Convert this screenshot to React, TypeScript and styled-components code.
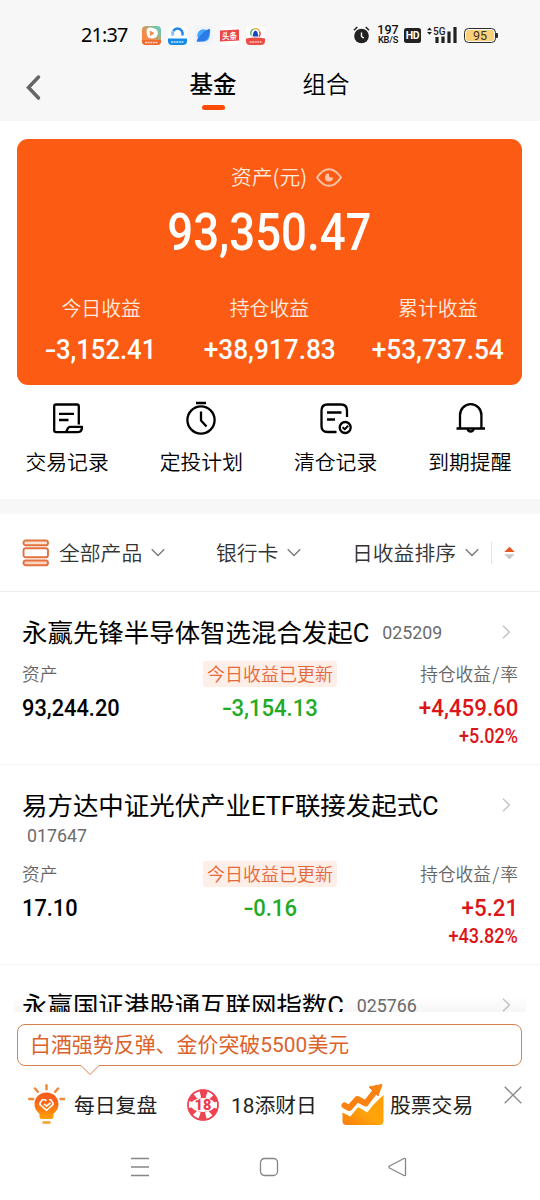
import React from "react";
import styled, { createGlobalStyle } from "styled-components";

const GlobalStyle = createGlobalStyle`
  * { box-sizing: border-box; }
  body {
    margin: 0;
    background: #fff;
    font-family: "Noto Sans CJK SC", sans-serif;
    font-weight: 350;
    color: #000;
  }
  svg { display: block; flex: none; }
`;

const mixedFont = `Roboto, "Noto Sans CJK SC", sans-serif`;

const Screen = styled.div`
  width: 540px;
  height: 1200px;
  overflow: hidden;
  display: flex;
  flex-direction: column;
  background: #fff;
`;

/* ---------- header ---------- */
const Header = styled.header`
  height: 121px;
  flex: none;
  background: #f7f7f7;
`;

const StatusBar = styled.div`
  height: 61px;
  padding: 9px 42px 0 81px;
  display: flex;
  align-items: center;
`;

const Clock = styled.span`
  width: 61px;
  font: 400 19.8px/24px "Noto Sans", sans-serif;
  letter-spacing: -0.8px;
  white-space: nowrap;
`;

const AppIcons = styled.div`
  display: flex;
  gap: 7px;
`;

const StatusRight = styled.div`
  margin-left: auto;
  display: flex;
  align-items: center;
`;

const Speed = styled.div`
  width: 22px;
  margin: 0 5px 0 7px;
  text-align: center;
  font: 500 12.5px/10px Roboto, sans-serif;
  color: #111;
  white-space: nowrap;
  small { display: block; font-size: 9.3px; line-height: 10px; letter-spacing: -0.2px; }
`;

const HdBadge = styled.span`
  width: 17px;
  height: 15px;
  margin-right: 5px;
  border-radius: 2.5px;
  background: #222;
  color: #fff;
  text-align: center;
  font: 700 10.5px/15px Roboto, sans-serif;
  letter-spacing: -0.4px;
`;

const Battery = styled.div`
  width: 32px;
  height: 15px;
  margin-left: 7px;
  border: 1.3px solid #2b2b2b;
  border-radius: 4.5px;
  padding: 1px;
  span {
    display: block;
    height: 11px;
    border-radius: 2px;
    background: #fad07a;
    text-align: center;
    font: 400 12.5px/11.5px Roboto, sans-serif;
    color: #3d3420;
  }
`;

const BatteryCap = styled.i`
  width: 2px;
  height: 5px;
  background: #2b2b2b;
  border-radius: 0 1px 1px 0;
`;

const TabBar = styled.nav`
  height: 60px;
  padding-left: 26px;
  display: flex;
`;

const BackIcon = styled.svg`
  margin-top: 13px;
`;

const Tab = styled.div<{ $active?: boolean; $gap: number }>`
  width: 48px;
  margin-left: ${(p) => p.$gap}px;
  font-size: 23.5px;
  line-height: 44px;
  font-weight: ${(p) => (p.$active ? 500 : 350)};
  display: flex;
  flex-direction: column;
  align-items: center;
  white-space: nowrap;
  &::after {
    content: "";
    display: ${(p) => (p.$active ? "block" : "none")};
    width: 23px;
    height: 5px;
    border-radius: 3px;
    background: #fc4c05;
  }
`;

/* ---------- numbers ---------- */
const Figure = styled.span<{ $size: number; $color?: string; $origin?: string; $scale?: number }>`
  display: inline-block;
  font-family: Roboto, sans-serif;
  font-weight: 500;
  font-size: ${(p) => p.$size}px;
  color: ${(p) => p.$color ?? "inherit"};
  transform: scaleX(${(p) => p.$scale ?? 0.92});
  transform-origin: ${(p) => p.$origin ?? "center"};
  white-space: nowrap;
`;

const Minus = styled.span`
  display: inline-block;
  width: 0.42em;
  transform: scaleX(1.35);
  transform-origin: 10% 50%;
`;

function Amount({ value, ...rest }: { value: string; $size: number; $color?: string; $origin?: string; $scale?: number }) {
  const negative = value.startsWith("-");
  return (
    <Figure {...rest}>
      {negative && <Minus>-</Minus>}
      {negative ? value.slice(1) : value}
    </Figure>
  );
}

/* ---------- asset card ---------- */
const AssetCard = styled.section`
  height: 246px;
  margin: 18px 18px 0 17px;
  flex: none;
  border-radius: 11px;
  background: #fb5b13;
  color: #fff;
`;

const AssetLabel = styled.div`
  height: 76px;
  padding-left: 34px;
  display: flex;
  align-items: center;
  justify-content: center;
  gap: 9px;
  font-size: 20.8px;
  color: #ffeadf;
  span { padding-bottom: 2px; }
`;

const Total = styled.div`
  height: 64px;
  margin-top: -14px;
  line-height: 64px;
  text-align: center;
`;

const Stats = styled.div`
  margin-top: 27px;
  display: grid;
  grid-template-columns: repeat(3, 1fr);
`;

const Stat = styled.div`
  display: flex;
  flex-direction: column;
  align-items: center;
  label { font-size: 19.9px; line-height: 31px; color: #ffeadf; }
  > span { line-height: 53px; }
`;

/* ---------- shortcuts ---------- */
const Shortcuts = styled.section`
  height: 114px;
  padding: 15px 3px 0 0;
  flex: none;
  display: grid;
  grid-template-columns: repeat(4, 1fr);
`;

const Shortcut = styled.div`
  display: flex;
  flex-direction: column;
  align-items: center;
  font-size: 20.8px;
  line-height: 31px;
  span { margin-top: 8px; }
`;

const Band = styled.div`
  height: 15px;
  flex: none;
  background: #f7f7f7;
`;

/* ---------- filters ---------- */
const Filters = styled.section`
  height: 78px;
  flex: none;
  padding: 0 25px 0 22px;
  display: flex;
  align-items: center;
  border-bottom: 1px solid #ececec;
`;

const Filter = styled.div<{ $width: number }>`
  width: ${(p) => p.$width}px;
  display: flex;
  align-items: center;
  gap: 9px;
  font-size: 20.8px;
  color: #333;
  white-space: nowrap;
  span { padding-bottom: 2px; }
`;

const SortToggle = styled.div`
  height: 22px;
  padding-left: 12px;
  border-left: 1px solid #e3e3e3;
  display: flex;
  align-items: center;
`;

/* ---------- fund list ---------- */
const FundList = styled.main`
  height: 420px;
  flex: none;
  overflow: hidden;
`;

const Fund = styled.article`
  padding: 22px 22px 15px;
  border-bottom: 1px solid #f3f3f3;
`;

const FundHead = styled.div`
  display: flex;
  align-items: center;
  height: 36px;
  font: 380 25.45px/36px ${mixedFont};
  white-space: nowrap;
  svg { margin-left: auto; margin-right: 7px; }
`;

const FundName = styled.span`
  padding-top: 1px;
`;

const Code = styled.span<{ $below?: boolean }>`
  display: block;
  font: 400 17.8px/25px Roboto, sans-serif;
  color: #6b6b6b;
  margin-left: ${(p) => (p.$below ? 5 : 13)}px;
  padding-bottom: ${(p) => (p.$below ? 2 : 0)}px;
`;

const FundGrid = styled.div`
  margin-top: 11px;
  height: 88px;
  display: grid;
  grid-template-columns: 1fr 134px 1fr;
`;

const Column = styled.div<{ $align: string }>`
  display: flex;
  flex-direction: column;
  align-items: ${(p) => p.$align};
  > label { height: 26px; font-size: 17.7px; line-height: 25px; color: #666; white-space: nowrap; }
  > label i { font-style: normal; padding: 0 1.2px; }
  > span { line-height: 41px; }
  > span + span { line-height: 17px; }
`;

const Tag = styled.div`
  width: 134px;
  height: 26px;
  border-radius: 3px;
  background: #feeee8;
  color: #e5683a;
  text-align: center;
  font-size: 18px;
  line-height: 25px;
  white-space: nowrap;
`;

/* ---------- bottom panel ---------- */
const BottomPanel = styled.footer`
  position: relative;
  height: 188px;
  flex: none;
  padding: 12px 18px 0 17px;
  background: #fff;
  &::before {
    content: "";
    position: absolute;
    left: 14px;
    right: 14px;
    top: -16px;
    height: 16px;
    background: linear-gradient(rgba(0, 0, 0, 0), rgba(0, 0, 0, 0.035));
  }
`;

const Bubble = styled.div`
  position: relative;
  height: 42px;
  padding-left: 12px;
  border: 1px solid #d9804f;
  border-radius: 8px;
  color: #dc622c;
  font: 400 20.95px/41px ${mixedFont};
  white-space: nowrap;
`;

const BubbleTail = styled.svg`
  position: absolute;
  left: 62px;
  top: 39px;
`;

const Promos = styled.div`
  height: 78px;
  display: flex;
  align-items: center;
  font: 380 20.8px/30px ${mixedFont};
  color: #222;
`;

const Promo = styled.div<{ $width: number; $gap: number }>`
  width: ${(p) => p.$width}px;
  display: flex;
  align-items: center;
  gap: ${(p) => p.$gap}px;
  white-space: nowrap;
  span { padding-top: 2px; }
`;

const CloseIcon = styled.svg`
  margin: -21px 0 0 auto;
`;

const SystemNav = styled.div`
  height: 46px;
  padding: 0 132px 0 131px;
  padding: 0 114px 0 113px;
  display: flex;
  align-items: center;
  justify-content: space-between;
`;

const Chevron = () => (
  <svg width="14" height="9" viewBox="0 0 14 9" fill="none" stroke="#777" strokeWidth="1.3">
    <path d="M.7 1.2 7 7.5l6.300-6.300" />
  </svg>
);

const Arrow = () => (
  <svg width="9" height="14" viewBox="0 0 9 14" fill="none" stroke="#c4c4c4" strokeWidth="1.4">
    <path d="M1 .7 7.400 7 1 13.300" />
  </svg>
);

const miniText = { fontFamily: "Noto Sans CJK SC, sans-serif", fontWeight: 700, textAnchor: "middle" as const, fill: "#fff" };

function StatusApps() {
  return (
    <AppIcons>
      <svg width="19" height="19" viewBox="0 0 19 19">
        <defs>
          <linearGradient id="video" x1="0" y1="1" x2="1" y2="0">
            <stop offset=".4" stopColor="#f58b4b" /><stop offset=".85" stopColor="#6fc9ae" />
          </linearGradient>
        </defs>
        <rect width="19" height="19" rx="4" fill="url(#video)" />
        <path d="M0 14h19v1a4 4 0 0 1-4 4H4a4 4 0 0 1-4-4z" fill="#f06a2c" />
        <path d="M4.500 5.500q0-4 4-4 8 1 7.300 6-.5 5-6.300 5-5.300-.5-5-7z" fill="#fff" />
        <path d="M8.300 5.200 11.800 7.200 8.300 9.400z" fill="#f58b4b" stroke="#f58b4b" strokeLinejoin="round" />
        <path d="M3 16.500h13" stroke="#ffd9c5" strokeWidth="1.300" strokeDasharray="2 .6" />
      </svg>
      <svg width="19" height="19" viewBox="0 0 19 19">
        <rect width="19" height="19" rx="4" fill="#fff" />
        <path d="M5 9.500a5 5 0 1 1 9.200 0" fill="none" stroke="#2286e8" strokeWidth="2.400" />
        <path d="M5 9.500a5 5 0 0 1 0-5" fill="none" stroke="#9ccdf7" strokeWidth="2.400" />
        <path d="M0 12.500h19V15a4 4 0 0 1-4 4H4a4 4 0 0 1-4-4z" fill="#148be6" />
        <path d="M3 16h13" stroke="#c9e7ff" strokeWidth="1.500" strokeDasharray="2 .6" />
      </svg>
      <svg width="19" height="19" viewBox="0 0 19 19">
        <rect width="19" height="19" rx="4" fill="#f0f3f8" />
        <circle cx="9.500" cy="9.500" r="6.200" fill="#45a5f8" />
        <path d="M3 15.800C1 14 13 2 15.800 3.200c1.200 1.500-1 12-7 12-2.500.3-4 .8-5.800.6z" fill="#2d7bea" />
      </svg>
      <svg width="19" height="19" viewBox="0 0 19 19">
        <rect width="19" height="19" rx="4" fill="#fff" />
        <path d="M0 4.500 19 3.500v11L0 15.500z" fill="#ea4548" />
        <text x="9.500" y="12.600" fontSize="7.500" {...miniText}>头条</text>
      </svg>
      <svg width="19" height="19" viewBox="0 0 19 19">
        <rect width="19" height="19" rx="4" fill="#fff" />
        <path d="M5.500 9.500a4.500 4.500 0 0 1 2-6.500" fill="none" stroke="#3dae5a" strokeWidth="1.300" />
        <path d="M7.500 3a4.500 4.500 0 0 1 6 2.500" fill="none" stroke="#e7a92d" strokeWidth="1.300" />
        <path d="M13.500 5.500a4.500 4.500 0 0 1-.5 5" fill="none" stroke="#db3d3d" strokeWidth="1.300" />
        <path d="M9.500 4.500c3 1.500 2 4 3 6h-6c1-2 0-4.500 3-6z" fill="#1745c2" />
        <path d="M0 12.500q9.500-2 19 0V15a4 4 0 0 1-4 4H4a4 4 0 0 1-4-4z" fill="#ee4b42" />
        <path d="M3.500 16h12" stroke="#ffc8c3" strokeWidth="1.500" strokeDasharray="2 .6" />
      </svg>
    </AppIcons>
  );
}

function StatusIcons() {
  return (
    <StatusRight>
      <svg width="17" height="18" viewBox="0 0 17 18">
        <circle cx="8.500" cy="10" r="7.300" fill="#222" />
        <path d="M1 4.200 4.300 1M16 4.200 12.700 1" stroke="#222" strokeWidth="1.600" />
        <path d="M8.500 6.500v4l2.300 1.600" fill="none" stroke="#f7f7f7" strokeWidth="1.400" />
      </svg>
      <Speed>197<small>KB/S</small></Speed>
      <HdBadge>HD</HdBadge>
      <svg width="31" height="18" viewBox="0 0 31 18">
        <path d="m1 4.200 2.500-2.700L6 4.200zM1 6l2.500 2.700L6 6z" fill="#222" />
        <text x="7" y="8.500" fontFamily="Roboto, sans-serif" fontWeight="500" fontSize="10" fill="#222">5G</text>
        <path d="M11 17v-6M17 17v-6.500M23 17V5.500M29 17V1" stroke="#222" strokeWidth="3.200" />
      </svg>
      <Battery><span>95</span></Battery>
      <BatteryCap />
    </StatusRight>
  );
}

const shortcuts = [
  {
    label: "交易记录",
    icon: <><path d="M30.800 24.500V6.300q0-1.800-1.800-1.800H8Q6.200 4.500 6.200 6.300v24q0 1.800 1.800 1.800H17c3 0 1.500-5.300 5-5.300h12c0 3.500-1.500 5.300-4 5.300H17" /><path d="M11 13.800h15M11 20h9.500" /></>,
  },
  {
    label: "定投计划",
    icon: <><circle cx="19" cy="20" r="13.600" /><path d="M14 3h10M19 11.500v9l5.500 6" /></>,
  },
  {
    label: "清仓记录",
    icon: <><path d="M30 17V10.500q0-6-6-6H10.500Q4.500 4.500 4.500 10.500v15.500q0 6 6 6h9M10 12.500H24.500M10 19.500H18" /><circle cx="28.200" cy="27.500" r="5.500" /><path d="m25.500 27.200 2.200 2 3.500-3.400" strokeWidth="1.900" /></>,
  },
  {
    label: "到期提醒",
    icon: <><path d="M9 28V15a10.700 10.800 0 0 1 21.400 0v13M5.500 28.500h28.500M16.500 29a3.200 3.300 0 0 0 6.200 0" /></>,
  },
];

const gain = "#dc1518";
const loss = "#23aa25";

interface FundData {
  name: string;
  code: string;
  codeBelow?: boolean;
  asset: string;
  today: string;
  profit: string;
  rate: string;
}

const funds: FundData[] = [
  { name: "永赢先锋半导体智选混合发起C", code: "025209", asset: "93,244.20", today: "-3,154.13", profit: "+4,459.60", rate: "+5.02%" },
  { name: "易方达中证光伏产业ETF联接发起式C", code: "017647", codeBelow: true, asset: "17.10", today: "-0.16", profit: "+5.21", rate: "+43.82%" },
];

function FundRow({ fund }: { fund: FundData }) {
  return (
    <Fund>
      <FundHead>
        <FundName>{fund.name}</FundName>
        {!fund.codeBelow && <Code>{fund.code}</Code>}
        <Arrow />
      </FundHead>
      {fund.codeBelow && <Code $below>{fund.code}</Code>}
      <FundGrid>
        <Column $align="flex-start">
          <label>资产</label>
          <Amount value={fund.asset} $size={24.5} $origin="left" $scale={0.89} />
        </Column>
        <Column $align="center">
          <Tag>今日收益已更新</Tag>
          <Amount value={fund.today} $size={24.5} $color={loss} $scale={0.9} />
        </Column>
        <Column $align="flex-end">
          <label>持仓收益<i>/</i>率</label>
          <Amount value={fund.profit} $size={24.5} $color={gain} $origin="right" $scale={0.91} />
          <Amount value={fund.rate} $size={20.5} $color={gain} $origin="right" $scale={0.88} />
        </Column>
      </FundGrid>
    </Fund>
  );
}

export default function App() {
  return (
    <Screen>
      <GlobalStyle />
      <Header>
        <StatusBar>
          <Clock>21:37</Clock>
          <StatusApps />
          <StatusIcons />
        </StatusBar>
        <TabBar>
          <BackIcon width="16" height="27" viewBox="0 0 16 27" fill="none" stroke="#666" strokeWidth="3.500" strokeLinecap="round">
            <path d="M12.500 3 2.500 13.500l10 10.500" />
          </BackIcon>
          <Tab $active $gap={147}>基金</Tab>
          <Tab $gap={65}>组合</Tab>
        </TabBar>
      </Header>

      <AssetCard>
        <AssetLabel>
          <span>资产(元)</span>
          <svg width="26" height="19" viewBox="0 0 26 19" fill="none" stroke="#ffc4ab" strokeWidth="1.900">
            <path d="M1 9.500Q6.500 1.200 13 1.200T25 9.500Q19.500 17.800 13 17.800T1 9.500z" />
            <path d="M13 5.500a4 4 0 1 0 4 4h-2.500A1.800 1.800 0 0 1 13 7.500z" fill="#ffc4ab" stroke="none" />
          </svg>
        </AssetLabel>
        <Total><Amount value="93,350.47" $size={51.5} $scale={0.885} /></Total>
        <Stats>
          <Stat><label>今日收益</label><Amount value="-3,152.41" $size={28.5} $scale={0.9} /></Stat>
          <Stat><label>持仓收益</label><Amount value="+38,917.83" $size={28.5} /></Stat>
          <Stat><label>累计收益</label><Amount value="+53,737.54" $size={28.5} /></Stat>
        </Stats>
      </AssetCard>

      <Shortcuts>
        {shortcuts.map((s) => (
          <Shortcut key={s.label}>
            <svg width="38" height="38" viewBox="0 0 38 38" fill="none" stroke="#000" strokeWidth="2.300" strokeLinejoin="round">{s.icon}</svg>
            <span>{s.label}</span>
          </Shortcut>
        ))}
      </Shortcuts>
      <Band />

      <Filters>
        <Filter $width={194}>
          <svg width="28" height="28" viewBox="0 0 28 28" fill="#fff" stroke="#e2723f" strokeWidth="1.900">
            <rect x="1.500" y="1.500" width="24.500" height="4.800" rx="2.400" fill="#fde3d5" />
            <rect x="1.500" y="9.300" width="24.500" height="9" rx="2.400" />
            <rect x="1.500" y="21.500" width="24.500" height="4.800" rx="2.400" fill="#fbd3bf" />
          </svg>
          <span>全部产品</span>
          <Chevron />
        </Filter>
        <Filter $width={136}><span>银行卡</span><Chevron /></Filter>
        <Filter $width={139}><span>日收益排序</span><Chevron /></Filter>
        <SortToggle>
          <svg width="11" height="14" viewBox="0 0 11 14">
            <path d="M.3 6 5.500.7 10.700 6z" fill="#e8571f" />
            <path d="M.3 8.200 5.500 13.500l5.200-5.300z" fill="#c9c9c9" />
          </svg>
        </SortToggle>
      </Filters>

      <FundList>
        {funds.map((f) => <FundRow key={f.code} fund={f} />)}
        <Fund>
          <FundHead>
            <FundName>永赢国证港股通互联网指数C</FundName>
            <Code>025766</Code>
            <Arrow />
          </FundHead>
        </Fund>
      </FundList>

      <BottomPanel>
        <Bubble>
          白酒强势反弹、金价突破5500美元
          <BubbleTail width="20" height="12" viewBox="0 0 20 12">
            <path d="M1 0v1.500L10 10.500 19 1.500V0z" fill="#fff" />
            <path d="M1 1.500 10 10.500 19 1.500" fill="none" stroke="#d9804f" />
          </BubbleTail>
        </Bubble>
        <Promos>
          <Promo $width={169} $gap={8}>
            <svg width="49" height="42" viewBox="0 0 49 42">
              <defs>
                <linearGradient id="bulb" x1="0" y1="0" x2="0" y2="1"><stop offset=".3" stopColor="#f8601c" /><stop offset="1" stopColor="#ffa200" /></linearGradient>
              </defs>
              <path d="M29.500 8.500c7.200 0 12 5.200 12 11.800 0 5-3 7.500-5 9.700V32.500q0 2.500-2.500 2.500h-9q-2.500 0-2.500-2.500V30c-2-2.200-5-4.700-5-9.700 0-6.600 4.800-11.800 12-11.800z" fill="url(#bulb)" />
              <path d="M25.500 38.500h8" stroke="#f6a22f" strokeWidth="2.600" />
              <path d="M29.500 1.200v4M18 4.500l2.800 3.300M41 4.500l-2.800 3.300M12.200 15h4M43.500 15H47" stroke="#ee8a3a" strokeWidth="2.500" strokeLinecap="round" />
              <path d="m29.500 17-1.300-1.200h-3l-2.200 3.200v1.700l6.500 5.600 6.500-5.600V19l-2.200-3.200H32M27 20l2.500 2 4-3" fill="none" stroke="#fff" strokeWidth="1.600" />
            </svg>
            <span>每日复盘</span>
          </Promo>
          <Promo $width={155} $gap={11}>
            <svg width="34" height="34" viewBox="0 0 34 34">
              <circle cx="17" cy="17" r="15.500" fill="#ee4452" />
              <circle cx="17" cy="17" r="11" fill="none" stroke="#fff" strokeWidth="6.500" strokeDasharray="5.300 6.219" transform="rotate(-13 17 17)" />
              <ellipse cx="17" cy="17" rx="12" ry="7" fill="#fff" />
              <circle cx="17" cy="17" r="15" fill="none" stroke="#ee4452" strokeWidth="1.500" />
              <text x="17" y="22.300" fontFamily="Roboto, sans-serif" fontWeight="900" fontSize="14.500" textAnchor="middle" fill="#ea3c4c">18</text>
            </svg>
            <span>18添财日</span>
          </Promo>
          <Promo $width={132} $gap={6}>
            <svg width="43" height="42" viewBox="0 0 43 42">
              <defs>
                <linearGradient id="stock" x1="1" y1="0" x2="0" y2="1"><stop stopColor="#ff9a00" /><stop offset=".5" stopColor="#ffa60c" /><stop offset="1" stopColor="#fc7c0a" /></linearGradient>
              </defs>
              <path d="M1.500 27 8 31.500 17 22l8 5.500L42.500 11v26q0 4-4 4h-33q-4 0-4-4z" fill="url(#stock)" />
              <path d="M1 24.500 8.500 28.500l8-9.500 9 5L38 8.500" fill="none" stroke="#fff" strokeWidth="6.500" />
              <path d="M3.500 21.500 8.300 24l8-9 8.500 4.500L34 7.500" fill="none" stroke="#fb8210" strokeWidth="6" strokeLinejoin="round" strokeLinecap="round" />
              <path d="M28 3 41 .5 37 12z" fill="#fb8210" stroke="#fb8210" strokeLinejoin="round" />
            </svg>
            <span>股票交易</span>
          </Promo>
          <CloseIcon width="18" height="18" viewBox="0 0 18 18" stroke="#888" strokeWidth="1.300">
            <path d="m.7.7 16.600 16.600M17.300.7.7 17.300" />
          </CloseIcon>
        </Promos>
        <SystemNav>
          <svg width="20" height="20" viewBox="0 0 20 20" stroke="#858585" strokeWidth="1.400"><path d="M1 1.500h18M1 10h18M1 18.500h18" /></svg>
          <svg width="20" height="20" viewBox="0 0 20 20" fill="none" stroke="#858585" strokeWidth="1.300"><rect x="1.500" y="1.500" width="17" height="17" rx="4" /></svg>
          <svg width="20" height="20" viewBox="0 0 20 20" fill="none" stroke="#858585" strokeWidth="1.300" strokeLinejoin="round"><path d="M1.500 9 16 1.500q1.500-.5 1.500 1v15q0 1.500-1.500 1L1.500 11q-1-1 0-2z" /></svg>
        </SystemNav>
      </BottomPanel>
    </Screen>
  );
}
